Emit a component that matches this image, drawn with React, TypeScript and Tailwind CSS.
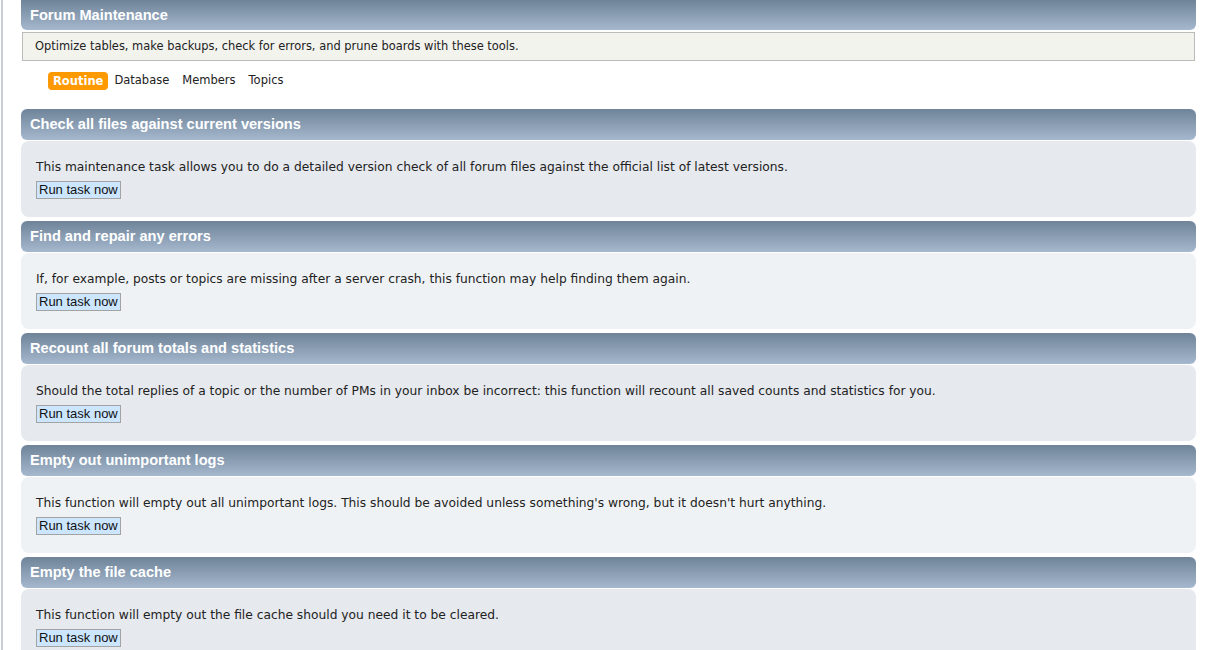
import React from "react";

type Task = {
  title: string;
  desc: string;
};

const tasks: Task[] = [
  {
    title: "Check all files against current versions",
    desc: "This maintenance task allows you to do a detailed version check of all forum files against the official list of latest versions.",
  },
  {
    title: "Find and repair any errors",
    desc: "If, for example, posts or topics are missing after a server crash, this function may help finding them again.",
  },
  {
    title: "Recount all forum totals and statistics",
    desc: "Should the total replies of a topic or the number of PMs in your inbox be incorrect: this function will recount all saved counts and statistics for you.",
  },
  {
    title: "Empty out unimportant logs",
    desc: "This function will empty out all unimportant logs. This should be avoided unless something's wrong, but it doesn't hurt anything.",
  },
  {
    title: "Empty the file cache",
    desc: "This function will empty out the file cache should you need it to be cleared.",
  },
];

const verdana = "font-['Verdana','DejaVu_Sans',sans-serif]";
const arial = "font-['Liberation_Sans',Arial,sans-serif]";

const TitleBar = ({ title, className }: { title: string; className: string }) => (
  <div
    className={`flex items-center pl-[9px] bg-gradient-to-b from-[#6f8399] to-[#a5b8ce] rounded-[6px] text-white font-bold text-[14.6px] ${arial} ${className}`}
  >
    {title}
  </div>
);

const TaskBlock = ({ task, i }: { task: Task; i: number }) => {
  // alternate background like windowbg / windowbg2
  const bg = i % 2 == 0 ? "bg-[#e6e9ee]" : "bg-[#eff2f5]";
  return (
    <div className="mb-[4px]">
      <TitleBar title={task.title} className="h-[31px] mb-px pt-[1px]" />
      <div className={`${bg} rounded-[8px] pl-[15px] pt-[17px] pb-[18px] flex flex-col items-start`}>
        <p className={`${verdana} text-[12.25px] leading-[18px] text-[#222] mb-[5px]`}>{task.desc}</p>
        <button
          className={`${arial} block h-[18px] px-[2px] bg-[#cde6ff] border border-[#a3a3a3] text-[13px] leading-[16px] text-[#111]`}
        >
          Run task now
        </button>
      </div>
    </div>
  );
};

export default function App() {
  return (
    <div className="w-[1215px] h-[650px] overflow-hidden bg-white flex">
      <div className="ml-px w-[2px] bg-[#c9ced6]" />
      <div className="flex-1 pl-[18px] pr-[19px]">
        <TitleBar title="Forum Maintenance" className="h-[30px] rounded-t-none pt-[1px]" />
        <div
          className={`mt-[2px] h-[29px] mx-px border border-[#bbbbbb] bg-[#f3f3ee] flex items-center pl-[12px] ${verdana} text-[11.45px] text-[#222]`}
        >
          Optimize tables, make backups, check for errors, and prune boards with these tools.
        </div>
        <div className={`flex items-center gap-[13px] pl-[27px] mt-[11px] h-[18px] ${verdana} text-[11.5px] text-[#222]`}>
          <span className="bg-[#ff9900] text-white font-bold rounded-[4px] px-[5px] h-[18px] leading-[18px] -mr-[7px]">
            Routine
          </span>
          <span>Database</span>
          <span>Members</span>
          <span>Topics</span>
        </div>
        <div className="mt-[19px]">
          {tasks.map((task, i) => (
            <TaskBlock task={task} i={i} key={task.title} />
          ))}
        </div>
      </div>
    </div>
  );
}
